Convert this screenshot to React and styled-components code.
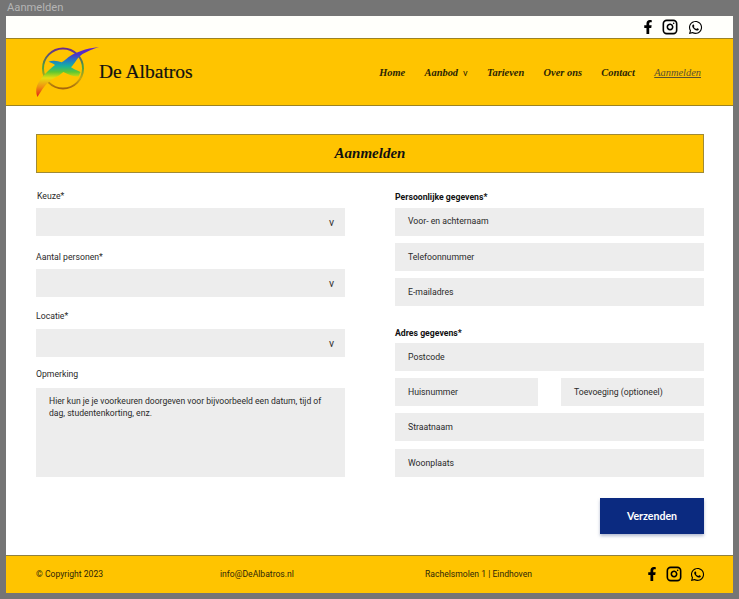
import React from 'react';
import styled, {createGlobalStyle} from 'styled-components';
import {FaFacebookF, FaWhatsapp} from 'react-icons/fa';
import {FiInstagram} from 'react-icons/fi';

const Global = createGlobalStyle`
    * { box-sizing: border-box; }
    body {
        margin: 0;
        background: #757575;
        font-family: Roboto, "Liberation Sans", sans-serif;
    }
`;

const yellow = '#ffc400';
const serif = '"Liberation Serif", serif';

const Page = styled.div`
    width: 739px;
    height: 599px;
    padding: 0 6px 6px;
    display: flex;
    flex-direction: column;
    overflow: hidden;
`;

const WindowTitle = styled.div`
    height: 16px;
    padding-left: 1px;
    font-size: 11.2px;
    line-height: 15px;
    color: #b4b4b4;
`;

const TopBar = styled.div`
    height: 22px;
    background: #fffffb;
    display: flex;
    justify-content: flex-end;
    align-items: center;
    padding-right: 30px;
`;

const Icons = styled.div`
    display: flex;
    align-items: center;
    gap: ${p => p.$gap}px;
    color: #000;
`;

const FacebookIcon = styled(FaFacebookF)`
    margin-right: ${p => p.$pull}px;
`;

const Header = styled.header`
    height: 68px;
    background: ${yellow};
    border-top: 1px solid #9c8322;
    border-bottom: 1px solid #9c8322;
    display: flex;
    align-items: center;
    justify-content: space-between;
    padding: 0 32px 0 30px;
`;

const Brand = styled.div`
    display: flex;
    align-items: center;
`;

const BrandName = styled.div`
    font-family: ${serif};
    font-size: 19.5px;
    color: #111;
    -webkit-text-stroke: 0.2px #111;
    margin-left: -1px;
`;

const Nav = styled.nav`
    display: flex;
    align-items: center;
    gap: 19.4px;
`;

const NavLink = styled.a`
    font-family: ${serif};
    font-style: italic;
    font-weight: ${p => (p.$active ? 400 : 700)};
    font-size: 10.4px;
    color: ${p => (p.$active ? '#5a5030' : '#2c2405')};
    text-decoration: ${p => (p.$active ? 'underline' : 'none')};
`;

const Caret = styled.span`
    font-family: Roboto, sans-serif;
    font-style: normal;
    font-weight: 400;
    font-size: 9.5px;
    margin-left: 5px;
`;

const Main = styled.main`
    flex: 1;
    background: #fff;
    padding: 28px 29px 21px 30px;
    display: flex;
    flex-direction: column;
`;

const Banner = styled.h1`
    margin: 0;
    height: 39px;
    background: ${yellow};
    border: 1px solid #a08a35;
    display: flex;
    align-items: center;
    justify-content: center;
    font-family: ${serif};
    font-style: italic;
    font-weight: 700;
    font-size: 15px;
    color: #111;
`;

const Columns = styled.div`
    display: grid;
    grid-template-columns: 309px 309px;
    column-gap: 50px;
    margin-top: 15px;
`;

const Column = styled.div`
    display: flex;
    flex-direction: column;
`;

const Label = styled.div`
    height: 14px;
    line-height: 14px;
    font-size: 8.7px;
    font-weight: ${p => (p.$bold ? 700 : 400)};
    color: ${p => (p.$bold ? '#111' : '#2a2a2a')};
    margin-top: ${p => p.$top || 0}px;
    margin-bottom: ${p => p.$bottom}px;
    padding-left: ${p => p.$left || 0}px;
`;

const Select = styled.div`
    height: 28px;
    background: #ededed;
    display: flex;
    align-items: center;
    justify-content: flex-end;
    padding-right: 11px;
    font-size: 10.5px;
    color: #333;
`;

const Textarea = styled.div`
    height: 89px;
    background: #ededed;
    padding: 7px 13px;
    font-size: 8.6px;
    line-height: 12px;
    color: #2a2a2a;
`;

const Input = styled.div`
    flex: ${p => (p.$half ? 1 : 'none')};
    height: 28px;
    margin-top: ${p => p.$top || 0}px;
    background: #ededed;
    display: flex;
    align-items: center;
    padding-left: 13px;
    padding-bottom: ${p => p.$up || 0}px;
    font-size: 8.7px;
    color: #2a2a2a;
`;

const InputRow = styled.div`
    display: flex;
    gap: 23px;
    margin-top: 7px;
`;

const Actions = styled.div`
    display: flex;
    justify-content: flex-end;
    margin-top: 21px;
`;

const SubmitButton = styled.button`
    width: 104px;
    height: 36px;
    border: 0;
    background: #0b2a80;
    box-shadow: 0 2px 3px rgba(40, 60, 120, 0.35);
    color: #fff;
    font-family: Lato, sans-serif;
    font-weight: 700;
    font-size: 10.6px;
`;

const Footer = styled.footer`
    height: 38px;
    background: ${yellow};
    border-top: 1px solid #8f8142;
    display: grid;
    grid-template-columns: 184px 205px 1fr auto;
    align-items: center;
    padding: 0 28px 1px 30px;
    font-size: 8.6px;
    color: #2e2608;
`;

function Logo() {
    return (
        <svg width="64" height="52" viewBox="0 0 64 52">
            <defs>
                <linearGradient id="bird" x1="0" y1="0" x2="0" y2="1">
                    <stop offset="0" stopColor="#6a1ec8" />
                    <stop offset="0.14" stopColor="#5030c8" />
                    <stop offset="0.28" stopColor="#2080c0" />
                    <stop offset="0.38" stopColor="#18b0a0" />
                    <stop offset="0.5" stopColor="#60c830" />
                    <stop offset="0.62" stopColor="#e8dc10" />
                    <stop offset="0.8" stopColor="#f09010" />
                    <stop offset="1" stopColor="#e02018" />
                </linearGradient>
                <linearGradient id="ring" x1="0" y1="0" x2="0" y2="1">
                    <stop offset="0" stopColor="#6a2a90" />
                    <stop offset="0.45" stopColor="#4aa040" />
                    <stop offset="0.75" stopColor="#c8a810" />
                    <stop offset="1" stopColor="#a8660c" />
                </linearGradient>
            </defs>
            <circle cx="27" cy="22.5" r="20" fill="none" stroke="url(#ring)" strokeWidth="2" />
            <path
                d="M63 1 C56 2 50 3 45.7 4.7 C39 7 35 9 32.3 11.3 C30 13 28 15.5 25.7 16.3 C23 15.5 20 14.5 17.3 14.7
                   C15.5 14.8 14 15.2 12.5 15.7 C15 16.5 17.5 17.5 19 19 C15 22 12 25 9 28 C5 32 1 38 0.3 43
                   C0 46 0.5 49 1.5 51 C3 48.5 4.5 46 6.5 43 C8.5 40 10.5 38 13.5 35.5 C16 33 20 31 23 29.5 L27.3 26
                   C29.5 27 31.5 28 34 29 C37 30 40 30.5 42.5 30.5 L44.5 26 C41 24.5 37.5 23 35 21.3 C37 19 38.5 17 40 14.7
                   C42 12 44 10 46.5 8 C51 5.5 57 3 63 1 Z"
                fill="url(#bird)"
            />
        </svg>
    );
}

function Socials({gap, pull}) {
    return (
        <Icons $gap={gap}>
            <FacebookIcon size={14} $pull={pull} />
            <FiInstagram size={16} strokeWidth={2.4} />
            <FaWhatsapp size={15} />
        </Icons>
    );
}

export default function App() {
    return (
        <Page>
            <Global />
            <WindowTitle>Aanmelden</WindowTitle>
            <TopBar>
                <Socials gap={10} pull={-3} />
            </TopBar>
            <Header>
                <Brand>
                    <Logo />
                    <BrandName>De Albatros</BrandName>
                </Brand>
                <Nav>
                    <NavLink>Home</NavLink>
                    <NavLink>Aanbod<Caret>v</Caret></NavLink>
                    <NavLink>Tarieven</NavLink>
                    <NavLink>Over ons</NavLink>
                    <NavLink>Contact</NavLink>
                    <NavLink $active>Aanmelden</NavLink>
                </Nav>
            </Header>
            <Main>
                <Banner>Aanmelden</Banner>
                <Columns>
                    <Column>
                        <Label $top={1} $bottom={5} $left={1}>Keuze*</Label>
                        <Select>v</Select>
                        <Label $top={14} $bottom={5}>Aantal personen*</Label>
                        <Select>v</Select>
                        <Label $top={12} $bottom={6}>Locatie*</Label>
                        <Select>v</Select>
                        <Label $top={10} $bottom={7}>Opmerking</Label>
                        <Textarea>
                            Hier kun je je voorkeuren doorgeven voor bijvoorbeeld een datum, tijd of dag, studentenkorting, enz.
                        </Textarea>
                    </Column>
                    <Column>
                        <Label $bold $top={2} $bottom={4}>Persoonlijke gegevens*</Label>
                        <Input $up={2}>Voor- en achternaam</Input>
                        <Input $top={7}>Telefoonnummer</Input>
                        <Input $top={7}>E-mailadres</Input>
                        <Label $bold $top={20} $bottom={3}>Adres gegevens*</Label>
                        <Input>Postcode</Input>
                        <InputRow>
                            <Input $half>Huisnummer</Input>
                            <Input $half>Toevoeging (optioneel)</Input>
                        </InputRow>
                        <Input $top={7}>Straatnaam</Input>
                        <Input $top={8}>Woonplaats</Input>
                    </Column>
                </Columns>
                <Actions>
                    <SubmitButton>Verzenden</SubmitButton>
                </Actions>
            </Main>
            <Footer>
                <span>© Copyright 2023</span>
                <span>info@DeAlbatros.nl</span>
                <span>Rachelsmolen 1 | Eindhoven</span>
                <Socials gap={8} pull={-1} />
            </Footer>
        </Page>
    );
}
